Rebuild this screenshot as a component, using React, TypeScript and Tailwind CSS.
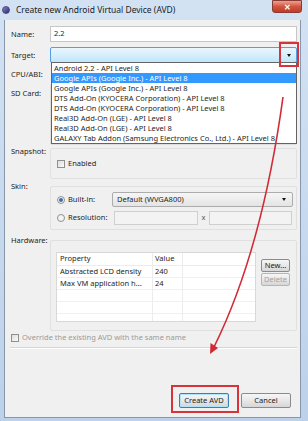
import React from 'react'

const targets = [
  'Android 2.2 - API Level 8',
  'Google APIs (Google Inc.) - API Level 8',
  'Google APIs (Google Inc.) - API Level 8',
  'DTS Add-On (KYOCERA Corporation) - API Level 8',
  'DTS Add-On (KYOCERA Corporation) - API Level 8',
  'Real3D Add-On (LGE) - API Level 8',
  'Real3D Add-On (LGE) - API Level 8',
  'GALAXY Tab Addon (Samsung Electronics Co., Ltd.) - API Level 8',
]

function Checkbox() {
  return <span className="w-[8px] h-[8px] border border-[#8e8f8f] bg-gradient-to-br from-[#dcdcdc] to-[#fbfbfb] shrink-0" />
}

function Radio({ checked }: { checked?: boolean }) {
  return (
    <span className="w-[8px] h-[8px] rounded-full border border-[#8e8f8f] bg-[#f4f4f4] flex items-center justify-center shrink-0">
      {checked && <span className="w-[4px] h-[4px] rounded-full bg-[#3b6fa8]" />}
    </span>
  )
}

function Button({ children, primary, disabled, className }: { children: React.ReactNode; primary?: boolean; disabled?: boolean; className?: string }) {
  return (
    <div
      className={`flex items-center justify-center rounded-[2px] border bg-gradient-to-b from-[#f6f6f6] via-[#e8e8e8] to-[#d6d6d6] ${
        primary ? 'border-[#3c7fb1] shadow-[inset_0_0_0_1px_#aee3fb]' : disabled ? 'border-[#b5b5b5]' : 'border-[#8b8b8b]'
      } ${disabled ? 'text-[#a0a0a0]' : 'text-[#1a1a1a]'} ${className ?? ''}`}
    >
      {children}
    </div>
  )
}

function Label({ children }: { children: React.ReactNode }) {
  return <div className="w-[45px] pl-[6px] shrink-0 leading-[10px] text-[#1e1e1e]">{children}</div>
}

export default function App() {
  return (
    <div className="w-[308px] h-[421px] relative overflow-hidden bg-gradient-to-b from-[#d3e2f3] to-[#bcd1ea] font-['Noto_Sans',sans-serif] text-[7.5px]">
      {/* Title bar */}
      <div className="h-[20px] flex items-center pl-[2px] gap-[6px]">
        <span className="w-[8px] h-[8px] rounded-full bg-gradient-to-br from-[#8c86c8] to-[#2c2a6e] border border-[#4a4680]" />
        <span className="text-[8.5px] text-[#1c1c1c]">Create new Android Virtual Device (AVD)</span>
      </div>
      <div className="absolute top-0 right-[6px] w-[30px] h-[13px] rounded-b-[3px] border border-[#8a3b33] bg-gradient-to-b from-[#e9a193] via-[#d2553f] to-[#c23a26] flex items-center justify-center text-white text-[8px] font-bold leading-none">
        ✕
      </div>

      {/* Dialog body */}
      <div className="ml-[4px] w-[297px] h-[398px] bg-[#f0f0f0] border border-t-0 border-[#8796a8] flex flex-col pr-[3px]">
        {/* Name */}
        <div className="mt-[6px] h-[16px] flex items-center">
          <Label>Name:</Label>
          <div className="flex-1 h-full bg-white border border-[#c6c6c6] flex items-center pl-[3px] text-[#1e1e1e]">2.2</div>
        </div>
        {/* Target */}
        <div className="mt-[5px] h-[16px] flex items-center">
          <Label>Target:</Label>
          <div className="flex-1 h-full rounded-[2px] border border-[#569de5] bg-gradient-to-b from-[#eaf6fd] via-[#d7effc] to-[#bee6fd] flex justify-end items-center pr-[5px]">
            <span className="w-0 h-0 border-l-[2px] border-r-[2px] border-t-[3px] border-l-transparent border-r-transparent border-t-[#111]" />
          </div>
        </div>
        {/* CPU/ABI */}
        <div className="mt-[4px] h-[14px] flex items-center">
          <Label>CPU/ABI:</Label>
        </div>
        {/* SD Card */}
        <div className="mt-[3px] h-[61px] flex">
          <div className="pt-[4px]"><Label>SD Card:</Label></div>
          <div className="flex-1 border border-[#dedede] rounded-[2px]" />
        </div>
        {/* Snapshot */}
        <div className="mt-[1px] h-[33px] flex">
          <div><Label>Snapshot:</Label></div>
          <div className="flex-1 mt-[2px] border border-[#e0e0e0] rounded-[2px] flex items-center pl-[6px] gap-[3px]">
            <Checkbox />
            <span className="text-[#1e1e1e]">Enabled</span>
          </div>
        </div>
        {/* Skin */}
        <div className="mt-[2px] h-[49px] flex">
          <div><Label>Skin:</Label></div>
          <div className="flex-1 mt-[5px] border border-[#e0e0e0] rounded-[2px] flex flex-col pl-[6px] pr-[3px] pt-[5px] gap-[4px]">
            <div className="h-[15px] flex items-center">
              <Radio checked />
              <span className="ml-[3px] w-[44px] text-[#1e1e1e]">Built-in:</span>
              <div className="flex-1 h-full rounded-[2px] border border-[#acacac] bg-gradient-to-b from-[#f6f6f6] to-[#e4e4e4] flex items-center justify-between pl-[4px] pr-[6px] text-[#1e1e1e]">
                Default (WVGA800)
                <span className="w-0 h-0 border-l-[2px] border-r-[2px] border-t-[3px] border-l-transparent border-r-transparent border-t-[#111]" />
              </div>
            </div>
            <div className="h-[14px] flex items-center">
              <Radio />
              <span className="ml-[3px] w-[46px] text-[#1e1e1e]">Resolution:</span>
              <div className="w-[84px] h-full border border-[#cfcfcf] bg-[#f3f3f3]" />
              <span className="w-[11px] text-center text-[#555]">x</span>
              <div className="w-[83px] h-full border border-[#cfcfcf] bg-[#f3f3f3]" />
            </div>
          </div>
        </div>
        {/* Hardware */}
        <div className="mt-[3px] h-[98px] flex">
          <div className="pt-[2px]"><Label>Hardware:</Label></div>
          <div className="flex-1 mt-[7px] border border-[#e0e0e0] rounded-[2px] flex pl-[5px] pt-[11px] gap-[5px]">
            <div className="w-[200px] h-[70px] overflow-hidden bg-white border border-[#d8d8d8] flex flex-col text-[#1e1e1e]">
              <div className="h-[13px] shrink-0 flex items-center border-b border-[#ececec]">
                <span className="w-[96px] pl-[3px] border-r border-[#ececec] h-full flex items-center">Property</span>
                <span className="w-[30px] pl-[2px] border-r border-[#ececec] h-full flex items-center">Value</span>
              </div>
              {[
                ['Abstracted LCD density', '240'],
                ['Max VM application h...', '24'],
                ['', ''],
                ['', ''],
                ['', ''],
              ].map(([p, v], i) => (
                <div key={i} className="h-[12px] shrink-0 flex items-center border-b border-[#f0f0f0]">
                  <span className="w-[96px] pl-[3px] border-r border-[#ececec] h-full flex items-center">{p}</span>
                  <span className="w-[30px] pl-[2px] border-r border-[#ececec] h-full flex items-center">{v}</span>
                </div>
              ))}
            </div>
            <div className="flex flex-col gap-[1px] pt-[7px]">
              <Button className="w-[29px] h-[13px]">New...</Button>
              <Button disabled className="w-[29px] h-[13px]">Delete</Button>
            </div>
          </div>
        </div>
        {/* Override */}
        <div className="mt-[2px] h-[10px] flex items-center pl-[6px] gap-[3px]">
          <Checkbox />
          <span className="text-[#9a9a9a]">Override the existing AVD with the same name</span>
        </div>
        <div className="mt-[4px] ml-[5px] h-[2px] border-t border-[#d5d5d5] border-b border-b-white" />
        {/* Buttons */}
        <div className="mt-[44px] flex justify-end gap-[12px] pr-[6px]">
          <Button primary className="w-[50px] h-[15px]">Create AVD</Button>
          <Button className="w-[50px] h-[15px]">Cancel</Button>
        </div>
      </div>

      {/* Target dropdown popup */}
      <div className="absolute left-[51px] top-[62px] w-[246px] h-[82px] bg-white border border-[#646464] text-[#1e1e1e]">
        {targets.map((t, i) => (
          <div key={i} className={`h-[10px] leading-[10px] pl-[2px] whitespace-nowrap ${i === 1 ? 'bg-[#3399ff] text-white' : ''}`}>
            {t}
          </div>
        ))}
      </div>

      {/* Annotations */}
      <div className="absolute left-[279px] top-[42px] w-[20px] h-[25px] border-2 border-[#d6333b]" />
      <div className="absolute left-[171px] top-[385px] w-[68px] h-[28px] border-2 border-[#d6333b]" />
      <svg className="absolute inset-0 pointer-events-none" width="308" height="421">
        <path d="M283 97 Q262 250 214 347" stroke="#d02a35" strokeWidth="1.6" fill="none" />
        <path d="M210 354 L210.5 343 L218 348 Z" fill="#d02a35" />
      </svg>
    </div>
  )
}
